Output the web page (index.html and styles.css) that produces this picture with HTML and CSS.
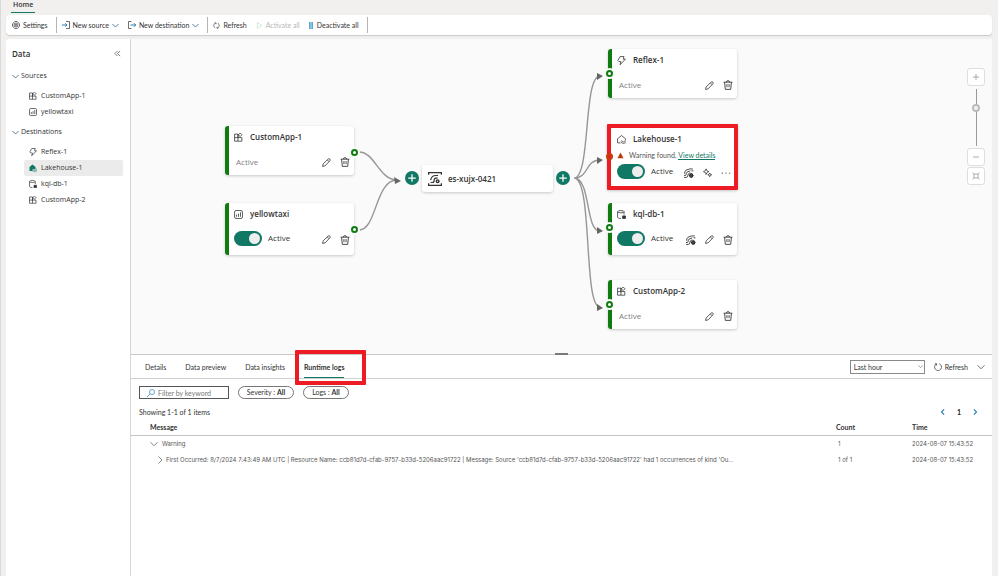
FILE: index.html
```html
<!DOCTYPE html>
<html lang="en">
<head>
<meta charset="utf-8">
<title>es-xujx-0421</title>
<link rel="stylesheet" href="styles.css">
</head>
<body>
<svg class="sprite" aria-hidden="true">
  <symbol id="app" viewBox="0 0 16 16"><path d="M1 2h6v12.500H1zM1 8.200h13v6.300H7M7 8V2M11 0l3.200 3.200L11 6.400 7.800 3.200z"/></symbol>
  <symbol id="chart" viewBox="0 0 16 16"><rect x="1" y="1" width="14" height="14" rx="2.500"/><path d="M4.500 12V8M8 12V6.500M11.500 12V4"/></symbol>
  <symbol id="bolt" viewBox="0 0 16 16"><path d="M5.500 1h7L11 5.500h4L5.500 15.500 7 10H3.500L1.500 8z"/></symbol>
  <symbol id="house" viewBox="0 0 16 16"><path d="M5.500 14H1V6.500L8 1l7 5.500V9.500M6.500 11.500q1.500-2 3.200 0t3.200 0 2.600 0M6.500 14.500q1.500-2 3.200 0t3.200 0 2.600 0"/></symbol>
  <symbol id="db" viewBox="0 0 16 16"><path d="M1 3v10Q1 15 7 15M12.500 3V8"/><ellipse cx="6.800" cy="3" rx="5.700" ry="2"/><path d="M10 10.500h5v4.500h-5z" fill="currentColor"/></symbol>
  <symbol id="pencil" viewBox="0 0 16 16"><path d="M1 15l1-4.500L11 1.800q1.500-1.200 3 .2t0 3L5.500 14zM9.500 3.500l3 3"/></symbol>
  <symbol id="trash" viewBox="0 0 16 16"><path d="M1 3.500h14M5.500 3.500Q5.500 1 8 1t2.500 2.500M2.500 3.500l1.200 11.500h8.600l1.200-11.500M6.300 6.500v5M9.700 6.500v5"/></symbol>
  <symbol id="stream" viewBox="0 0 16 16"><path d="M0 15h4q2 0 2-3T10 7.500M0 12h2q1.500 0 1.500-3T10 4.500M0 9q1.500 0 1.500-3T9 1.500h5M12 4.500h3"/><circle cx="11.500" cy="12" r="2.300" stroke-width="2.400"/><path d="M11.500 8v8M7.500 12h8" stroke-width="1.200"/></symbol>
  <symbol id="spark" viewBox="0 0 16 16"><path d="M5.500 1.500L7 5l3.500 1.500L7 8l-1.500 3.500L4 8 .8 6.500 4 5zM12 9l1 2 2.500 1-2.500 1-1 2.500-1-2.500-2.500-1 2.500-1z"/></symbol>
  <symbol id="hub" viewBox="0 0 16 16"><path d="M.7 3.200V.8h14.600v2.400M.7 12.800v2.400h14.600v-2.400M3 12h2q2 0 2-2.700t4-2.600M3 9.300q1-5.300 6-5.300h2.500"/><circle cx="11" cy="10.500" r="1.500" stroke-width="1.700"/></symbol>
  <symbol id="down" viewBox="0 0 16 16"><path d="M1 4.500l7 7 7-7"/></symbol>
  <symbol id="right" viewBox="0 0 16 16"><path d="M5 1l7 7-7 7"/></symbol>
  <symbol id="left" viewBox="0 0 16 16"><path d="M11 1L4 8l7 7"/></symbol>
  <symbol id="collapse" viewBox="0 0 16 16"><path d="M8 2L2 8l6 6M14 2L8 8l6 6"/></symbol>
  <symbol id="gear" viewBox="0 0 16 16"><path d="M5.500 1h5L12 3l3 2.500v5L12 13l-1.500 2h-5L4 13l-3-2.500v-5L4 3z"/><circle cx="8" cy="8" r="4"/><circle cx="8" cy="8" r="1.500"/></symbol>
  <symbol id="in" viewBox="0 0 16 16"><path d="M8 1h7v14H8"/><path class="accent" d="M0 8h10M6.500 4.500L10 8l-3.500 3.500"/></symbol>
  <symbol id="out" viewBox="0 0 16 16"><path d="M7 1H1v14h6"/><path class="accent" d="M5 8h10.500M12 4.500L15.500 8 12 11.500"/></symbol>
  <symbol id="refresh" viewBox="0 0 16 16"><path d="M6 2a6.300 6.300 0 0 0-1 11.500M10 14a6.300 6.300 0 0 0 1-11.500M4 2h3v3M12 14H9v-3"/></symbol>
  <symbol id="reload" viewBox="0 0 16 16"><path d="M10.500 1.500a7 7 0 1 1-5.500.3M1.500 1.500H5V5"/></symbol>
  <symbol id="search" viewBox="0 0 16 16"><circle cx="10" cy="6" r="5"/><path d="M6.500 9.500L0 16"/></symbol>
  <symbol id="plus" viewBox="0 0 16 16"><path d="M8 2v12M2 8h12"/></symbol>
  <symbol id="minus" viewBox="0 0 16 16"><path d="M2 8h12"/></symbol>
  <symbol id="fit" viewBox="0 0 16 16"><path d="M4 4h8v8H4zM1 1l3 3M15 1l-3 3M1 15l3-3M15 15l-3-3"/></symbol>
</svg>

<div class="app">
  <header>
    <nav class="ribbon-tabs"><a class="home" href="#">Home</a></nav>
    <div class="ribbon">
      <div class="group"><button class="cmd"><svg class="icon"><use href="#gear"/></svg>Settings</button></div>
      <div class="group">
        <button class="cmd"><svg class="icon"><use href="#in"/></svg>New source<svg class="icon small blue"><use href="#down"/></svg></button>
        <button class="cmd"><svg class="icon"><use href="#out"/></svg>New destination<svg class="icon small blue"><use href="#down"/></svg></button>
      </div>
      <div class="group">
        <button class="cmd"><svg class="icon small"><use href="#refresh"/></svg>Refresh</button>
        <button class="cmd" disabled><svg class="icon small play" viewBox="0 0 16 16"><path d="M3 1.500l11 6.500-11 6.500z"/></svg>Activate all</button>
        <button class="cmd"><span class="pause"></span>Deactivate all</button>
      </div>
    </div>
  </header>

  <div class="workspace">
    <aside class="sidebar">
      <div class="side-head"><h2>Data</h2><button class="bare" aria-label="Collapse"><svg class="icon small"><use href="#collapse"/></svg></button></div>
      <button class="section"><svg class="icon small blue"><use href="#down"/></svg>Sources</button>
      <ul class="tree">
        <li><a href="#"><svg class="icon"><use href="#app"/></svg>CustomApp-1</a></li>
        <li><a href="#"><svg class="icon"><use href="#chart"/></svg>yellowtaxi</a></li>
      </ul>
      <button class="section"><svg class="icon small blue"><use href="#down"/></svg>Destinations</button>
      <ul class="tree">
        <li><a href="#"><svg class="icon"><use href="#bolt"/></svg>Reflex-1</a></li>
        <li><a class="selected" href="#"><svg class="icon solid" viewBox="0 0 16 16"><path d="M1 14V6l6-5 6 5v4H7v4z"/><path class="wave" d="M7 11.500q1.500-2 3 0t3 0 3 0M7 14.500q1.500-2 3 0t3 0 3 0"/></svg>Lakehouse-1</a></li>
        <li><a href="#"><svg class="icon"><use href="#db"/></svg>kql-db-1</a></li>
        <li><a href="#"><svg class="icon"><use href="#app"/></svg>CustomApp-2</a></li>
      </ul>
    </aside>

    <main>
      <section class="canvas">
        <svg class="edges" viewBox="0 0 861 315" aria-hidden="true">
          <path d="M228 113C244 113 248 141 266 141M228 191C246 191 244 141 266 141"/>
          <path d="M443 139C460 139 452 37 469 37M443 139C458 139 454 121 469 121M443 139C460 139 454 192 469 192M443 139C462 139 452 268 469 268"/>
          <path class="head" d="M263 138l7 4-6 3zM466 34l6 3-6 4zM466 118l6 3-6 4zM466 188l6 4-6 3zM466 265l6 4-6 3z"/>
        </svg>

        <article class="node n-app1">
          <h3><svg class="icon"><use href="#app"/></svg>CustomApp-1</h3>
          <div class="state"><span class="muted">Active</span><button class="bare push" aria-label="Edit"><svg class="icon"><use href="#pencil"/></svg></button><button class="bare" aria-label="Delete"><svg class="icon big"><use href="#trash"/></svg></button></div>
          <i class="port out"></i>
        </article>
        <article class="node tall n-taxi">
          <h3><svg class="icon"><use href="#chart"/></svg>yellowtaxi</h3>
          <div class="state"><label><input class="toggle" type="checkbox" checked>Active</label><button class="bare push" aria-label="Edit"><svg class="icon"><use href="#pencil"/></svg></button><button class="bare" aria-label="Delete"><svg class="icon big"><use href="#trash"/></svg></button></div>
          <i class="port out"></i>
        </article>

        <button class="add add-in" aria-label="Add source"><svg class="icon"><use href="#plus"/></svg></button>
        <article class="hub"><svg class="icon"><use href="#hub"/></svg><h3>es-xujx-0421</h3></article>
        <button class="add add-out" aria-label="Add destination"><svg class="icon"><use href="#plus"/></svg></button>

        <article class="node n-reflex">
          <h3><svg class="icon"><use href="#bolt"/></svg>Reflex-1</h3>
          <div class="state"><span class="muted">Active</span><button class="bare push" aria-label="Edit"><svg class="icon"><use href="#pencil"/></svg></button><button class="bare" aria-label="Delete"><svg class="icon big"><use href="#trash"/></svg></button></div>
          <i class="port in"></i>
        </article>
        <article class="node n-lake">
          <h3><svg class="icon"><use href="#house"/></svg>Lakehouse-1</h3>
          <p class="warn"><svg class="icon small" viewBox="0 0 16 16"><path class="tri" d="M8 1l7 13.500H1z"/><path d="M8 6v4M8 11.500v1.500" stroke="#7a2a08"/></svg>Warning found. <a href="#">View details</a></p>
          <div class="state"><label><input class="toggle" type="checkbox" checked>Active</label><button class="bare push" aria-label="Stream"><svg class="icon big"><use href="#stream"/></svg></button><button class="bare" aria-label="Optimize"><svg class="icon"><use href="#spark"/></svg></button><button class="bare" aria-label="More"><svg class="icon big dots" viewBox="0 0 16 16"><circle cx="2" cy="8" r="1"/><circle cx="8" cy="8" r="1"/><circle cx="14" cy="8" r="1"/></svg></button></div>
          <i class="port in warning"></i>
        </article>
        <article class="node tall n-kql">
          <h3><svg class="icon"><use href="#db"/></svg>kql-db-1</h3>
          <div class="state"><label><input class="toggle" type="checkbox" checked>Active</label><button class="bare push" aria-label="Stream"><svg class="icon big"><use href="#stream"/></svg></button><button class="bare" aria-label="Edit"><svg class="icon"><use href="#pencil"/></svg></button><button class="bare" aria-label="Delete"><svg class="icon big"><use href="#trash"/></svg></button></div>
          <i class="port in"></i>
        </article>
        <article class="node n-app2">
          <h3><svg class="icon"><use href="#app"/></svg>CustomApp-2</h3>
          <div class="state"><span class="muted">Active</span><button class="bare push" aria-label="Edit"><svg class="icon"><use href="#pencil"/></svg></button><button class="bare" aria-label="Delete"><svg class="icon big"><use href="#trash"/></svg></button></div>
          <i class="port in"></i>
        </article>

        <div class="zoom">
          <button aria-label="Zoom in"><svg class="icon"><use href="#plus"/></svg></button>
          <input type="range" min="0" max="100" value="70" aria-label="Zoom level">
          <button aria-label="Zoom out"><svg class="icon"><use href="#minus"/></svg></button>
          <button aria-label="Fit to screen"><svg class="icon"><use href="#fit"/></svg></button>
        </div>
        <i class="grip"></i>
      </section>

      <section class="logs">
        <div class="log-tabs">
          <a href="#">Details</a><a href="#">Data preview</a><a href="#">Data insights</a><a class="current" href="#">Runtime logs</a>
          <div class="log-actions">
            <div class="range"><select aria-label="Time range"><option>Last hour</option></select><svg class="icon small"><use href="#down"/></svg></div>
            <button class="cmd"><svg class="icon"><use href="#reload"/></svg>Refresh</button>
            <button class="bare" aria-label="Collapse panel"><svg class="icon"><use href="#down"/></svg></button>
          </div>
        </div>
        <div class="filters">
          <label class="search"><svg class="icon blue"><use href="#search"/></svg><input type="text" placeholder="Filter by keyword" aria-label="Filter by keyword"></label>
          <button class="pill wide">Severity :&nbsp;<b>All</b></button>
          <button class="pill">Logs :&nbsp;<b>All</b></button>
        </div>
        <div class="summary">
          <span>Showing 1-1 of 1 items</span>
          <div class="pager"><button class="bare" aria-label="Previous"><svg class="icon tiny"><use href="#left"/></svg></button><b>1</b><button class="bare" aria-label="Next"><svg class="icon tiny"><use href="#right"/></svg></button></div>
        </div>
        <table>
          <thead><tr><th>Message</th><th class="count">Count</th><th class="time">Time</th></tr></thead>
          <tbody>
            <tr><td><span class="cell"><svg class="icon"><use href="#down"/></svg>Warning</span></td><td>1</td><td>2024-08-07 15:43:52</td></tr>
            <tr><td><span class="cell nested"><svg class="icon"><use href="#right"/></svg>First Occurred: 8/7/2024 7:43:49 AM UTC | Resource Name: ccb81d7d-cfab-9757-b33d-5206aac91722 | Message: Source 'ccb81d7d-cfab-9757-b33d-5206aac91722' had 1 occurrences of kind 'Ou...</span></td><td>1 of 1</td><td>2024-08-07 15:43:52</td></tr>
          </tbody>
        </table>
        <i class="mark"></i>
      </section>
    </main>
  </div>
</div>
</body>
</html>
```
FILE: styles.css
```css
* { box-sizing: border-box; }
body {
  margin: 0;
  background: #f1f0ef;
  color: #333;
  font: 7px/10px "Open Sans", "Noto Sans", sans-serif;
}
button, input, select { font: inherit; color: inherit; margin: 0; }
button { background: none; border: 0; padding: 0; }
a { color: inherit; text-decoration: none; }
h2, h3, p, ul { margin: 0; padding: 0; }
ul { list-style: none; }
.sprite { position: absolute; width: 0; height: 0; }

.icon { width: 8px; height: 8px; flex: none; display: block; fill: none; stroke: currentColor; stroke-width: 1.400; overflow: visible; }
.icon.small { width: 7px; height: 7px; }
.icon.tiny { width: 6px; height: 6px; stroke-width: 3; }
.icon.big { width: 10px; height: 10px; }
.icon.blue { color: #4a6c8c; stroke-width: 2; }
.accent { stroke: #2b7cb3; stroke-width: 2; }
.bare { display: flex; align-items: center; }

.app { min-height: 100vh; display: flex; flex-direction: column; padding: 0 6px 0 5px; border-left: 1px solid #d9d9d9; }
.ribbon-tabs { height: 15px; padding-left: 5px; display: flex; align-items: flex-start; }
.home { height: 13px; padding: 0 2px; font-weight: 600; border-bottom: 1px solid #117865; }
.ribbon { height: 20px; display: flex; align-items: center; background: #fff; border-radius: 4px; box-shadow: 0 1px 1px #c8c8c8; padding-left: 6px; font-family: Lato, sans-serif; }
.group { display: flex; align-items: center; gap: 9px; height: 16px; padding-right: 8px; margin-right: 5px; border-right: 1px solid #b5b5b5; }
.cmd { display: flex; align-items: center; gap: 3px; }
.cmd:disabled { color: #b8b8b8; }
.play { color: #b5dcc0; }
.pause { width: 4px; height: 7px; margin-right: 1px; background: #86c3e4; border: solid #5fa6cd; border-width: 0 1px; }

.workspace { flex: 1; display: flex; margin-top: 4px; }
.sidebar { width: 124px; flex: none; background: #fff; border-radius: 4px 0 0 0; padding: 4px 7px 0 6px; }
.side-head { display: flex; justify-content: space-between; align-items: center; height: 21px; padding-right: 2px; }
.side-head h2 { font-size: 8px; font-weight: 600; }
.section { display: flex; align-items: center; gap: 2px; height: 24px; }
.tree a { display: flex; align-items: center; gap: 4px; height: 16px; margin-left: 12px; padding-left: 5px; border-radius: 2px; }
.tree .selected { background: #ebebeb; }
.icon.solid { fill: #117865; stroke: none; }
.icon .wave { fill: none; stroke: #117865; stroke-width: 1.400; }

main { flex: 1; min-width: 0; display: flex; flex-direction: column; border-left: 1px solid #d6d6d6; }
.canvas { position: relative; height: 316px; background: #fafafa; border-bottom: 1px solid #c8c8c8; }
.edges { position: absolute; left: 0; top: 0; width: 861px; height: 315px; fill: none; stroke: #969696; stroke-width: 1.400; }
.edges .head { fill: #666; stroke: none; }

.node, .hub { position: absolute; background: #fff; border-radius: 3px; box-shadow: 0 1px 3px #0003; }
.node { width: 129px; height: 49px; border-left: 4px solid #107c10; padding: 6px 4px 0 5px; }
.node.tall { height: 52px; }
.node h3, .hub h3 { font-size: 8px; line-height: 10px; font-weight: 600; }
.node h3 { display: flex; align-items: center; gap: 7px; }
.node h3 .icon { width: 9px; height: 9px; }
.state { display: flex; align-items: center; gap: 9px; height: 16px; margin-top: 12px; font-size: 8px; }
.tall .state { margin-top: 11px; }
.tall .bare, .n-lake .bare { padding-top: 3px; }
.muted { color: #808080; padding-left: 2px; }
.push { margin-left: auto; }
.state .icon { width: 9px; height: 9px; }
.state .icon.big { width: 10px; height: 10px; }
.state label { display: flex; align-items: center; gap: 6px; }
.toggle { appearance: none; width: 28px; height: 15px; border-radius: 8px; background: #117865; padding: 2px; display: flex; justify-content: flex-end; }
.toggle::before { content: ""; width: 11px; height: 11px; border-radius: 50%; background: #eee; }
.n-app1 { left: 94px; top: 87px; }
.n-taxi { left: 94px; top: 164px; }
.n-reflex { left: 477px; top: 10px; }
.n-kql { left: 477px; top: 164px; }
.n-app2 { left: 477px; top: 241px; }
.n-lake { left: 476px; top: 85px; width: 131px; height: 66px; border: 4px solid #ed1c24; border-radius: 1px; padding: 6px 3px 0 6px; }
.n-lake .state { margin-top: 3px; }
.warn { display: flex; align-items: center; gap: 5px; margin-top: 6px; white-space: pre; color: #555; font-family: Lato, sans-serif; }
.warn a { color: #117865; border-bottom: 1px solid; line-height: 8px; margin-left: -5px; }
.warn .tri { fill: #c43e0c; stroke: none; }
.dots { fill: currentColor; stroke: none; }
.port { position: absolute; width: 7px; height: 7px; border: 2px solid #107c10; border-radius: 50%; background: #fff; box-shadow: 0 0 0 2px #fafafa; }
.port.out { right: -4px; top: 23px; }
.port.in { left: -6px; top: 21px; }
.port.warning { left: -5px; top: 25px; border-color: #c43e0c; box-shadow: none; background: #ed1c24; }
.hub { left: 291px; top: 126px; width: 131px; height: 27px; display: flex; align-items: center; gap: 6px; padding-left: 6px; }
.hub .icon { width: 14px; height: 14px; }
.add { position: absolute; top: 132px; width: 14px; height: 14px; border-radius: 50%; background: #117865; color: #fff; display: grid; place-items: center; }
.add .icon { width: 10px; height: 10px; stroke-width: 2; }
.add-in { left: 274px; }
.add-out { left: 425px; }

.zoom { position: absolute; right: 7px; top: 29px; display: flex; flex-direction: column; align-items: center; gap: 2px; color: #8a8a8a; }
.zoom button { width: 18px; height: 18px; background: #fff; border: 1px solid #dedede; border-radius: 3px; display: grid; place-items: center; }
.zoom input { appearance: none; writing-mode: vertical-lr; direction: rtl; width: 9px; height: 57px; margin: 1px 0 0; background: linear-gradient(#999, #999) center / 1px 100% no-repeat; }
.zoom input::-webkit-slider-thumb { appearance: none; width: 8px; height: 8px; border: 2px solid #bbb; border-radius: 50%; background: #f4f4f4; }
.zoom button + button { margin-top: -1px; }
.grip { position: absolute; left: 50%; bottom: -1px; width: 13px; height: 2px; margin-left: -7px; background: #7a7a7a; }

.logs { position: relative; flex: 1; background: #fff; font-family: Lato, sans-serif; }
.log-tabs { display: flex; align-items: stretch; gap: 19px; height: 24px; padding-left: 14px; border-bottom: 1px solid #d0d0d0; line-height: 24px; }
.log-tabs .current { font-weight: 700; height: 23px; border-bottom: 1px solid #117865; }
.log-actions { display: flex; align-items: center; gap: 9px; margin-left: auto; padding-right: 7px; }
.range { position: relative; }
.range select { appearance: none; display: block; width: 75px; height: 14px; border: 1px solid #8a8a8a; border-radius: 0; background: #fff; padding: 0 3px; line-height: 12px; }
.range .icon { position: absolute; right: 2px; top: 4px; width: 5px; height: 5px; pointer-events: none; }
.filters { display: flex; gap: 9px; padding: 7px 8px 0; }
.search { display: flex; align-items: center; gap: 3px; width: 90px; height: 13px; padding-left: 7px; border: 1px solid #555; }
.search input { flex: 1; min-width: 0; border: 0; padding: 0; outline: 0; background: none; }
.search input::placeholder { color: #777; }
.search .blue { color: #2b7cb3; stroke-width: 1.400; }
.pill { height: 13px; width: 46px; border: 1px solid #777; border-radius: 7px; line-height: 11px; }
.pill.wide { width: 56px; }
b { font-weight: 700; }
.summary { display: flex; align-items: center; justify-content: space-between; height: 26px; padding: 0 14px 0 8px; }
.pager { display: flex; align-items: center; gap: 11px; color: #222; }
.pager .icon { color: #2b7cb3; }
table { width: 100%; border-collapse: collapse; table-layout: fixed; margin-top: -3px; }
th, td { padding: 0; text-align: left; height: 16px; font-weight: 400; color: #555; }
td { font-family: Inter, sans-serif; font-size: 6px; padding-top: 1px; }
th { font-weight: 700; color: #333; height: 13px; padding-bottom: 2px; border-bottom: 1px solid #c4c4c4; }
th:first-child { padding-left: 19px; }
.count { width: 76px; }
.time { width: 80px; }
td:nth-child(2) { padding-left: 2px; }
.cell { display: flex; align-items: center; gap: 4px; padding-left: 19px; white-space: nowrap; }
.cell.nested { padding-left: 25px; gap: 2px; }
.mark { position: absolute; left: 164px; top: -5px; width: 71px; height: 35px; border: 4px solid #ed1c24; border-radius: 1px; pointer-events: none; }
```
